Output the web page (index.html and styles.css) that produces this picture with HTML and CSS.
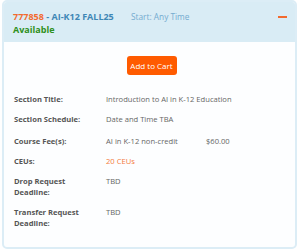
FILE: index.html
```html
<!DOCTYPE html>
<html>
<head>
<meta charset="utf-8">
<link rel="stylesheet" href="styles.css">
</head>
<body>
<div class="card">
  <div class="head">
    <div class="line1">
      <span class="title"><span class="num">777858</span> - AI-K12 FALL25</span>
      <span class="start">Start: Any Time</span>
      <span class="minus"></span>
    </div>
    <div class="avail">Available</div>
  </div>
  <div class="body">
    <div class="btnrow"><button class="btn">Add to Cart</button></div>
    <div class="rows">
      <div class="lab">Section Title:</div><div class="val">Introduction to AI in K-12 Education</div>
      <div class="lab">Section Schedule:</div><div class="val">Date and Time TBA</div>
      <div class="lab feerow">Course Fee(s):</div><div class="val fee feerow"><span class="feedesc">AI in K-12 non-credit</span><span>$60.00</span></div>
      <div class="lab">CEUs:</div><div class="val ceu">20 CEUs</div>
      <div class="lab">Drop Request Deadline:</div><div class="val">TBD</div>
      <div class="lab">Transfer Request Deadline:</div><div class="val">TBD</div>
    </div>
  </div>
</div>
</body>
</html>
```
FILE: styles.css
```css
html, body { margin: 0; padding: 0; background: #fff; }
body { font-family: "Open Sans", sans-serif; padding: 0 3px 2px 2px; }
.card {
  border: 2px solid #dcedf6;
  border-radius: 5px;
  overflow: hidden;
  height: 249px;
  box-sizing: border-box;
  background: #fdfeff;
}
.head {
  background: #d9ecf5;
  padding: 8px 6px 5px 9px;
  height: 40px;
  box-sizing: border-box;
}
.line1 { display: flex; align-items: center; height: 13px; }
.title { font-weight: 700; font-size: 9px; color: #3f87b5; width: 118px; white-space: nowrap; }
.num { color: #f26a2e; }
.start { font-size: 8.3px; color: #74abd0; flex: 1; white-space: nowrap; }
.minus { width: 9px; height: 2px; background: #f26a2e; margin-right: 2px; }
.avail { font-weight: 700; font-size: 9px; color: #2f9020; line-height: 14px; }
.body { padding: 14px 10px 10px 10px; }
.btnrow { display: flex; justify-content: center; padding-left: 4px; }
.btn {
  background: #ff5b00; color: #fff; border: 0; border-radius: 3px;
  font-family: "Open Sans", sans-serif; font-size: 8px;
  width: 50px; height: 19px; padding: 0;
}
.rows {
  display: grid; grid-template-columns: 92px 1fr;
  row-gap: 9px; margin-top: 19px; font-size: 7.6px; line-height: 11px;
}
.lab { font-weight: 700; color: #555; padding-right: 22px; }
.val { color: #666; }
.feerow { margin-top: 2px; }
.fee { display: flex; white-space: nowrap; }
.feedesc { width: 100px; }
.ceu { color: #f47b40; }
```
